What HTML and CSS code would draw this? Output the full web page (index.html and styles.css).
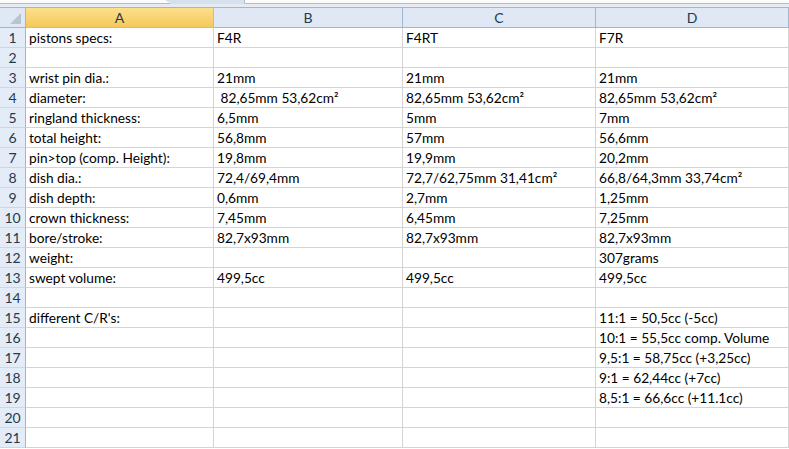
FILE: index.html
```html
<!DOCTYPE html>
<html lang="en">
<head>
    <meta charset="UTF-8">
    <title>Sheet1</title>
    <link rel="stylesheet" href="styles.css">
</head>
<body>
    <div class="top-strip">
        <div class="sheet-tab"></div>
    </div>
    <div class="sheet">
        <!-- column headers -->
        <div class="row head-row">
            <div class="corner"><span class="corner-tri"></span></div>
            <div class="col-head active">A</div>
            <div class="col-head">B</div>
            <div class="col-head">C</div>
            <div class="col-head">D</div>
        </div>

        <div class="row"><div class="row-num">1</div><div class="cell">pistons specs:</div><div class="cell">F4R</div><div class="cell">F4RT</div><div class="cell">F7R</div></div>
        <div class="row"><div class="row-num">2</div><div class="cell"></div><div class="cell"></div><div class="cell"></div><div class="cell"></div></div>
        <div class="row"><div class="row-num">3</div><div class="cell">wrist pin dia.:</div><div class="cell">21mm</div><div class="cell">21mm</div><div class="cell">21mm</div></div>
        <div class="row"><div class="row-num">4</div><div class="cell">diameter:</div><div class="cell"> 82,65mm 53,62cm²</div><div class="cell">82,65mm 53,62cm²</div><div class="cell">82,65mm 53,62cm²</div></div>
        <div class="row"><div class="row-num">5</div><div class="cell">ringland thickness:</div><div class="cell">6,5mm</div><div class="cell">5mm</div><div class="cell">7mm</div></div>
        <div class="row"><div class="row-num">6</div><div class="cell">total height:</div><div class="cell">56,8mm</div><div class="cell">57mm</div><div class="cell">56,6mm</div></div>
        <div class="row"><div class="row-num">7</div><div class="cell">pin&gt;top (comp. Height):</div><div class="cell">19,8mm</div><div class="cell">19,9mm</div><div class="cell">20,2mm</div></div>
        <div class="row"><div class="row-num">8</div><div class="cell">dish dia.:</div><div class="cell">72,4/69,4mm</div><div class="cell">72,7/62,75mm 31,41cm²</div><div class="cell">66,8/64,3mm 33,74cm²</div></div>
        <div class="row"><div class="row-num">9</div><div class="cell">dish depth:</div><div class="cell">0,6mm</div><div class="cell">2,7mm</div><div class="cell">1,25mm</div></div>
        <div class="row"><div class="row-num">10</div><div class="cell">crown thickness:</div><div class="cell">7,45mm</div><div class="cell">6,45mm</div><div class="cell">7,25mm</div></div>
        <div class="row"><div class="row-num">11</div><div class="cell">bore/stroke:</div><div class="cell">82,7x93mm</div><div class="cell">82,7x93mm</div><div class="cell">82,7x93mm</div></div>
        <div class="row"><div class="row-num">12</div><div class="cell">weight:</div><div class="cell"></div><div class="cell"></div><div class="cell">307grams</div></div>
        <div class="row"><div class="row-num">13</div><div class="cell">swept volume:</div><div class="cell">499,5cc</div><div class="cell">499,5cc</div><div class="cell">499,5cc</div></div>
        <div class="row"><div class="row-num">14</div><div class="cell"></div><div class="cell"></div><div class="cell"></div><div class="cell"></div></div>
        <div class="row"><div class="row-num">15</div><div class="cell">different C/R's:</div><div class="cell"></div><div class="cell"></div><div class="cell">11:1 = 50,5cc (-5cc)</div></div>
        <div class="row"><div class="row-num">16</div><div class="cell"></div><div class="cell"></div><div class="cell"></div><div class="cell">10:1 = 55,5cc comp. Volume</div></div>
        <div class="row"><div class="row-num">17</div><div class="cell"></div><div class="cell"></div><div class="cell"></div><div class="cell">9,5:1 = 58,75cc (+3,25cc)</div></div>
        <div class="row"><div class="row-num">18</div><div class="cell"></div><div class="cell"></div><div class="cell"></div><div class="cell">9:1 = 62,44cc (+7cc)</div></div>
        <div class="row"><div class="row-num">19</div><div class="cell"></div><div class="cell"></div><div class="cell"></div><div class="cell">8,5:1 = 66,6cc (+11.1cc)</div></div>
        <div class="row"><div class="row-num">20</div><div class="cell"></div><div class="cell"></div><div class="cell"></div><div class="cell"></div></div>
        <div class="row"><div class="row-num">21</div><div class="cell"></div><div class="cell"></div><div class="cell"></div><div class="cell"></div></div>
    </div>
</body>
</html>
```

FILE: styles.css
```css
* {
    box-sizing: border-box;
    margin: 0;
    padding: 0;
}

body {
    font-family: Lato, "Open Sans", sans-serif;
    font-size: 13.7px;
    color: #000;
    background: #fff;
    overflow: hidden;
}

.top-strip {
    height: 7px;
    background: #e6ebf2;
    border-top: 3px solid #fbfbfc;
    position: relative;
}

.top-strip::before {
    content: "";
    display: block;
    height: 1px;
    background: #b4bcc7;
}

.sheet-tab {
    position: absolute;
    left: 165px;
    top: -3px;
    width: 80px;
    height: 4px;
    background: #d6e1ee;
    border-right: 1px solid #b4bcc7;
    clip-path: polygon(0 0, 100% 0, 100% 100%, 8% 100%);
}

.row {
    display: grid;
    grid-template-columns: 26px 188px 189px 193px 193px;
    height: 20px;
}

.row > div {
    height: 20px;
    line-height: 19px;
    white-space: pre;
    overflow: visible;
}

.cell {
    padding-left: 3px;
    border-right: 1px solid #d4d4d4;
    border-bottom: 1px solid #d4d4d4;
}

.row-num {
    background: #e4ecf7;
    color: #27384d;
    font-size: 14px;
    text-align: center;
    border-right: 1px solid #9eb6ce;
    border-bottom: 1px solid #c9d7e8;
}

.head-row {
    border-top: 1px solid #9eb6ce;
    height: 21px;
}

.head-row > div {
    height: 20px;
}

.col-head {
    background: #dfe8f4;
    color: #27384d;
    font-size: 14px;
    text-align: center;
    border-right: 1px solid #9eb6ce;
    border-bottom: 1px solid #9eb6ce;
}

.col-head.active {
    background: linear-gradient(#fbe08d, #f6c85a);
    border-right-color: #f2b94a;
    border-bottom-color: #f2b94a;
}

.corner {
    background: #dfe8f4;
    border-right: 1px solid #9eb6ce;
    border-bottom: 1px solid #9eb6ce;
    position: relative;
}

.corner-tri {
    position: absolute;
    right: 4px;
    bottom: 3px;
    width: 0;
    height: 0;
    border-left: 11px solid transparent;
    border-bottom: 11px solid #b9c4d1;
}
```
